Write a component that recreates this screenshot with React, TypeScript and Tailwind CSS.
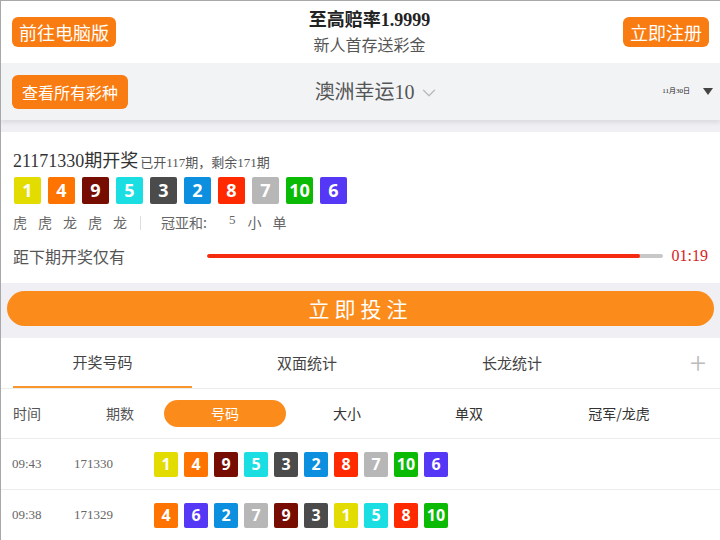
import { ChevronDown } from "lucide-react";

const ballColors: Record<number, string> = {
   1: "bg-[#e3dc00]",
   2: "bg-[#0b8fde]",
   3: "bg-[#4b4b4b]",
   4: "bg-[#ff7300]",
   5: "bg-[#1bdee2]",
   6: "bg-[#5438f5]",
   7: "bg-[#b7b7b7]",
   8: "bg-[#ff2a00]",
   9: "bg-[#760d00]",
   10: "bg-[#0bba05]",
};

const current = [1, 4, 9, 5, 3, 2, 8, 7, 10, 6];

const history = [
   { time: "09:43", issue: "171330", nums: [1, 4, 9, 5, 3, 2, 8, 7, 10, 6] },
   { time: "09:38", issue: "171329", nums: [4, 6, 2, 7, 9, 3, 1, 5, 8, 10] },
];

const Ball = ({ n, big }: { n: number; big?: boolean }) => (
   <div
      className={`${ballColors[n]} ${
         big ? "w-[27px] h-[27px] text-[18px]" : "w-[24px] h-[25px] text-[16px]"
      } rounded-[2px] flex items-center justify-center text-white font-bold font-['Open_Sans',sans-serif]`}
   >
      {n}
   </div>
);

const serif = "font-['Liberation_Serif','Noto_Sans_CJK_SC',serif]";

const App = () => {
   return (
      <div
         className={`w-[720px] h-[540px] overflow-hidden bg-[#efeff4] border-l border-t border-[#a8a8a8] ${serif}`}
      >
         {/* top header */}
         <div className="h-[62px] bg-white flex items-center justify-between px-[11px]">
            <button className="h-[30px] px-[7px] rounded-[6px] bg-[#f97c12] text-white text-[18px] leading-none font-['Noto_Sans_CJK_SC',sans-serif]">
               前往电脑版
            </button>
            <div className="flex flex-col items-center pt-[1px]">
               <div className="text-[18px] font-bold text-[#222] leading-[22px]">
                  至高赔率1.9999
               </div>
               <div className="text-[16px] text-[#555] leading-[22px] mt-[4px]">
                  新人首存送彩金
               </div>
            </div>
            <button className="h-[30px] px-[7px] rounded-[6px] bg-[#f97c12] text-white text-[18px] leading-none font-['Noto_Sans_CJK_SC',sans-serif]">
               立即注册
            </button>
         </div>

         {/* lottery selector */}
         <div className="h-[57px] bg-[#f2f3f5] flex items-center pl-[11px] pr-[7px] shadow-[0_3px_4px_rgba(0,0,0,0.08)] relative">
            <button className="h-[34px] px-[10px] rounded-[6px] bg-[#f97c12] text-white text-[16px] leading-none font-['Noto_Sans_CJK_SC',sans-serif]">
               查看所有彩种
            </button>
            <div className="flex-1 flex items-center justify-center pr-[36px]">
               <span className="text-[20px] text-[#555]">澳洲幸运10</span>
               <ChevronDown className="w-[22px] h-[22px] text-[#bbb] ml-[3px] mt-[2px]" strokeWidth={1.5} />
            </div>
            <div className="flex items-center">
               <span className="text-[7px] text-[#222] mr-[13px]">11月30日</span>
               <span className="w-0 h-0 border-l-[5px] border-r-[5px] border-t-[7px] border-l-transparent border-r-transparent border-t-[#444]"></span>
            </div>
         </div>

         {/* current draw */}
         <div className="mt-[12px] bg-white px-[12px] pt-[16px] h-[151px]">
            <div className="flex items-baseline">
               <span className="text-[18px] text-[#333]">21171330期开奖</span>
               <span className="text-[13px] text-[#555] ml-[2px]">已开117期，剩余171期</span>
            </div>
            <div className="flex gap-[7px] mt-[2px] pl-[1px]">
               {current.map((n, i) => (
                  <Ball key={i} n={n} big />
               ))}
            </div>
            <div className="flex items-center mt-[8px] text-[14px] text-[#666] font-['Noto_Sans_CJK_SC',sans-serif]">
               <span className="tracking-[11px]">虎虎龙虎龙</span>
               <span className="w-px h-[14px] bg-[#ddd] ml-[2px] mr-[20px]"></span>
               <span>冠亚和:</span>
               <span className={`ml-[22px] text-[13px] -mt-[6px] ${serif}`}>5</span>
               <span className="ml-[12px] tracking-[11px]">小单</span>
            </div>
            <div className="flex items-center mt-[11px]">
               <span className="text-[16px] text-[#555] w-[194px] font-['Noto_Sans_CJK_SC',sans-serif]">
                  距下期开奖仅有
               </span>
               <div className="w-[456px] h-[4px] bg-[#c8c8c8] rounded-full overflow-hidden">
                  <div className="h-full bg-[#f52a0e] rounded-full" style={{ width: "95%" }}></div>
               </div>
               <span className="ml-[9px] text-[16px] text-[#d61c1c]">01:19</span>
            </div>
         </div>

         {/* bet button */}
         <div className="px-[6px] pt-[8px] pb-[12px]">
            <button className="w-full h-[35px] rounded-full bg-[#fb8c1c] text-white text-[21px] tracking-[5px] leading-none font-['Noto_Sans_CJK_SC',sans-serif]">
               立即投注
            </button>
         </div>

         {/* tabs */}
         <div className="bg-white">
            <div className="h-[51px] flex items-stretch border-b border-[#ececec] text-[15px] text-[#444] font-['Noto_Sans_CJK_SC',sans-serif]">
               <div className="ml-[12px] w-[179px] flex items-center justify-center border-b-2 border-[#f9962e]">
                  开奖号码
               </div>
               <div className="w-[230px] flex items-center justify-center">双面统计</div>
               <div className="w-[180px] flex items-center justify-center">长龙统计</div>
               <div className="flex-1 flex items-center justify-end pr-[14px] pb-[4px] text-[#bbb] text-[30px] font-light leading-none">
                  +
               </div>
            </div>

            <div className="h-[50px] flex items-center text-[14px] text-[#333] font-['Noto_Sans_CJK_SC',sans-serif] border-b border-[#ececec]">
               <span className="ml-[12px] w-[93px] text-[#555]">时间</span>
               <span className="w-[58px] text-[#555]">期数</span>
               <span className="w-[122px] h-[27px] rounded-full bg-[#fb8c1c] text-white flex items-center justify-center">
                  号码
               </span>
               <span className="w-[122px] text-center">大小</span>
               <span className="w-[122px] text-center">单双</span>
               <span className="w-[178px] text-center">冠军/龙虎</span>
            </div>

            {history.map((row) => (
               <div
                  key={row.issue}
                  className="h-[51px] flex items-center border-b border-[#ececec] text-[13px] text-[#666]"
               >
                  <span className="ml-[11px] w-[62px]">{row.time}</span>
                  <span className="w-[80px]">{row.issue}</span>
                  <div className="flex gap-[6px]">
                     {row.nums.map((n, i) => (
                        <Ball key={i} n={n} />
                     ))}
                  </div>
               </div>
            ))}
         </div>
      </div>
   );
};

export default App;
